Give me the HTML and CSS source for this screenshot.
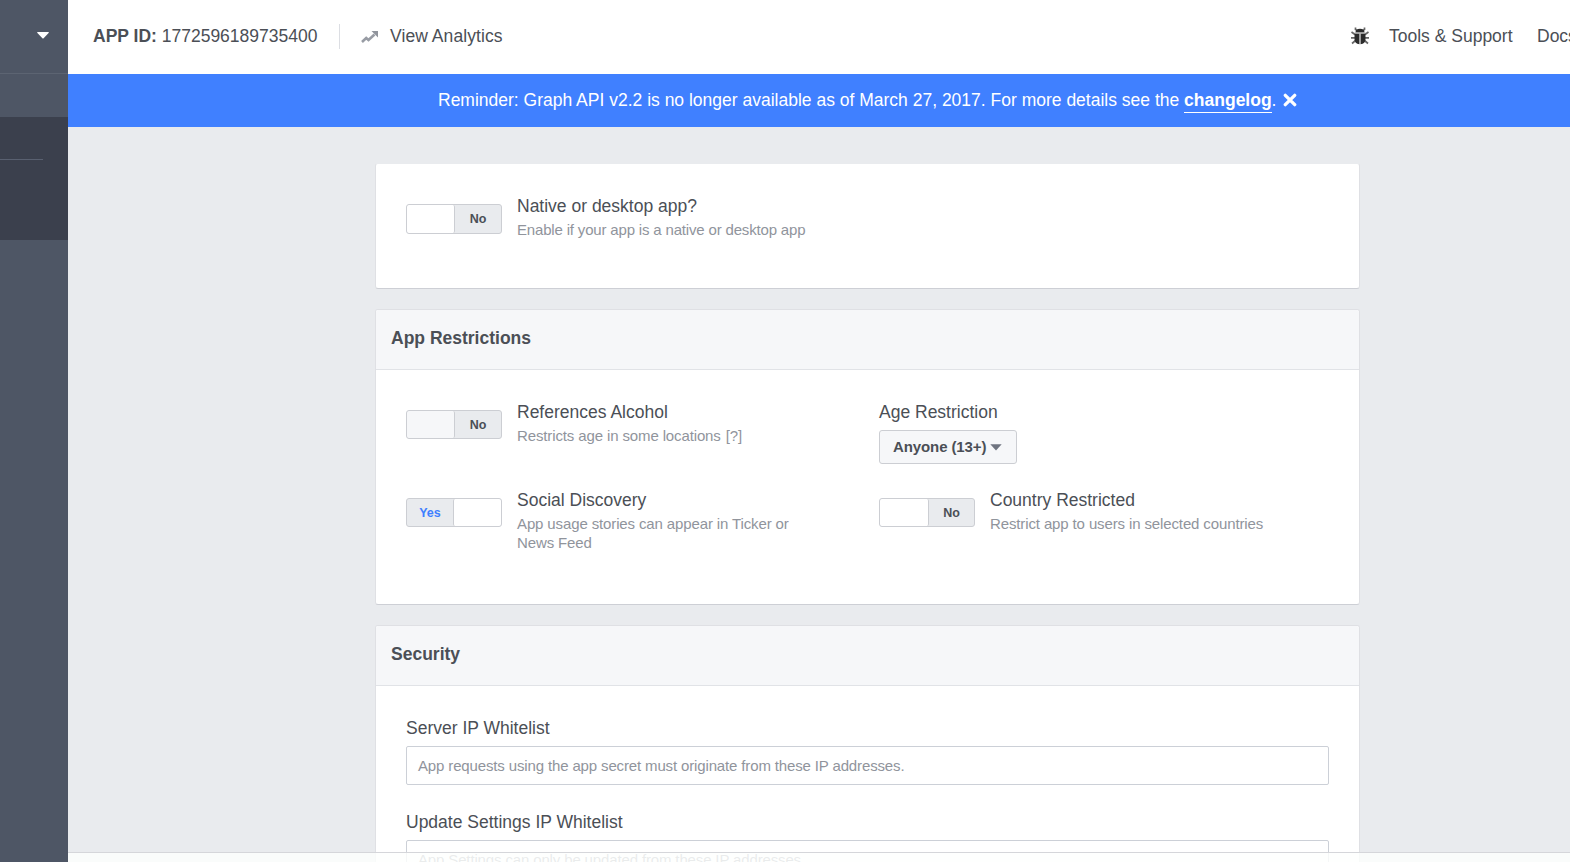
FILE: index.html
```html
<!DOCTYPE html>
<html lang="en">
<head>
<meta charset="utf-8">
<title>App Settings</title>
<link rel="stylesheet" href="styles.css">
</head>
<body>
<div class="app">
  <aside class="sidebar">
    <div class="side-top"><svg class="side-caret" width="12" height="7" viewBox="0 0 12 7"><path d="M.6 0h10.800q.8.4.2 1L6.600 6.200q-.6.5-1.200 0L.4 1Q-.2.4.6 0z" fill="#fff"/></svg></div>
    <div class="side-item"></div>
    <div class="side-active"><div class="side-line"></div></div>
  </aside>
  <div class="main">
    <header class="topbar">
      <div class="app-id"><b>APP ID:</b> 1772596189735400</div>
      <div class="separator"></div>
      <svg class="trend" width="18" height="14" viewBox="0 0 18 14"><path d="M1 12l4.200-4 2.300 2 6-5.500" fill="none" stroke="#989ca4" stroke-width="2.600"/><path d="M10.500 1H17v6.500z" fill="#90949c"/></svg>
      <a class="analytics">View Analytics</a>
      <svg class="bug" width="18" height="18" viewBox="0 0 18 18"><path d="M4.500.5v2l2 1M13.500.5v2l-2 1M.5 5l3.500 2.500M17.500 5L14 7.500M0 10.800h4M18 10.800h-4M1 16.500l3.500-3M17 16.500l-3.500-3" stroke="#666" stroke-width="1.700" fill="none"/><path d="M4.500 5.500Q4.500 1.800 9 1.800t4.500 3.700zM3.500 6.500h5v10.700Q3.500 17 3.500 12zM9.500 6.500h5V12q0 5-5 5.200z" fill="#2c2c2c"/><path d="M3.500 6h11M9 6.500v10.500" stroke="#aaa" stroke-width="1"/></svg>
      <a class="tools">Tools &amp; Support</a>
      <a class="docs">Docs</a>
    </header>
    <div class="banner">
      <span class="banner-text">Reminder: Graph API v2.2 is no longer available as of March 27, 2017. For more details see the <b>changelog</b>.</span>
      <svg class="close" width="14" height="14" viewBox="0 0 14 14"><path d="M2.300 2.300l9.400 9.400M11.700 2.300l-9.400 9.400" stroke="#fff" stroke-width="3.300" stroke-linecap="round"/></svg>
    </div>
    <main class="content">
      <section class="card card-native">
        <div class="setting">
          <div class="toggle tall"><span class="knob"></span><span class="state">No</span></div>
          <div class="copy native-copy"><h3>Native or desktop app?</h3><p>Enable if your app is a native or desktop app</p></div>
        </div>
      </section>
      <section class="card card-restrict">
        <h2>App Restrictions</h2>
        <div class="grid">
          <div class="setting">
            <div class="toggle"><span class="knob muted"></span><span class="state">No</span></div>
            <div class="copy"><h3>References Alcohol</h3><p>Restricts age in some locations <span class="help">[?]</span></p></div>
          </div>
          <div class="copy">
            <h3>Age Restriction</h3>
            <button class="select">Anyone (13+)<svg width="12" height="7" viewBox="0 0 12 7"><path d="M.3.2h11.400L6 6.600z" fill="#6f7480"/></svg></button>
          </div>
          <div class="setting">
            <div class="toggle on"><span class="state yes">Yes</span><span class="knob"></span></div>
            <div class="copy narrow"><h3>Social Discovery</h3><p>App usage stories can appear in Ticker or News Feed</p></div>
          </div>
          <div class="setting">
            <div class="toggle"><span class="knob wide"></span><span class="state">No</span></div>
            <div class="copy"><h3>Country Restricted</h3><p>Restrict app to users in selected countries</p></div>
          </div>
        </div>
      </section>
      <section class="card card-security">
        <h2>Security</h2>
        <div class="fields">
          <label class="field"><span>Server IP Whitelist</span><span class="input">App requests using the app secret must originate from these IP addresses.</span></label>
          <label class="field"><span>Update Settings IP Whitelist</span><span class="input">App Settings can only be updated from these IP addresses.</span></label>
        </div>
      </section>
    </main>
  </div>
</div>
<footer class="savebar"></footer>
</body>
</html>
```
FILE: styles.css
```css
* { box-sizing: border-box; }
html, body { margin: 0; height: 100%; overflow: hidden; }
body { font: 17.5px/23px "Liberation Sans", Arial, sans-serif; color: #4b4f56; background: #e9ebee; }
.app { display: flex; height: 862px; overflow: hidden; }

.sidebar { flex: none; width: 68px; background: #4e5665; }
.side-top { height: 74px; padding: 32px 0 0 37px; border-bottom: 1px solid #5c6472; line-height: 0; }
.side-item { height: 43px; }
.side-active { height: 123px; padding-top: 42px; background: #3b404d; }
.side-line { width: 43px; height: 1px; background: #596070; }

.main { flex: 1; min-width: 0; height: 862px; overflow: hidden; }
.topbar { display: flex; align-items: flex-start; height: 74px; padding: 24px 0 0 25px; background: #fff; white-space: nowrap; overflow: hidden; }
.app-id { flex: none; width: 246px; padding-top: 1px; }
.separator { flex: none; width: 1px; height: 25px; background: #dcdee3; }
.trend { flex: none; margin: 6px 0 0 21px; }
.analytics { flex: none; margin-left: 11px; padding-top: 1px; width: 961px; letter-spacing: .07px; }
.bug { flex: none; margin-top: 3px; }
.tools { margin-left: 20px; padding-top: 1px; width: 148px; flex: none; }
.docs { flex: none; padding-top: 1px; }

.banner { display: flex; height: 53px; padding: 15px 0 0 370px; background: #4080ff; color: #fff; white-space: nowrap; }
.banner b { display: inline-block; height: 24px; border-bottom: 1px solid #fff; }
.close { margin: 4px 0 0 7px; flex: none; }

.content { width: 985px; margin: 36px 0 0 307px; }
.card { background: #fff; border: 1px solid #dfe0e4; border-bottom-color: #cdcfd5; border-radius: 3px; }
.card-native { height: 126px; padding: 31px 30px; border-top-color: #e9ebee; }
.card-restrict { height: 296px; margin-top: 20px; }
.card-security { height: 320px; margin-top: 20px; }
h2 { margin: 0; height: 60px; padding: 17px 15px 0; background: #f6f7f9; border-bottom: 1px solid #e1e3e7; border-radius: 2px 2px 0 0; font-size: 17.5px; line-height: 23px; }
h3 { margin: 0; font-size: 17.5px; line-height: 23px; font-weight: 400; }
p { margin: 2px 0 0; font-size: 15px; line-height: 19px; letter-spacing: -.125px; color: #90949c; }
.native-copy p { letter-spacing: -.17px; }
.grid { display: grid; grid-template-columns: 473px 450px; grid-template-rows: 88px auto; padding: 31px 30px 0; }
.setting { display: flex; gap: 15px; }
.toggle { display: flex; flex: none; width: 96px; height: 29px; margin-top: 9px; border: 1px solid #ccced3; border-radius: 3px; background: #e9ebee; overflow: hidden; }
.tall { height: 30px; }
.knob { width: 48px; background: #fff; border-right: 1px solid #ccced3; border-radius: 2px; }
.wide { width: 49px; }
.muted { background: #f6f7f9; }
.on .knob { flex: 1; border-right: 0; border-left: 1px solid #ccced3; }
.state { flex: 1; text-align: center; font: bold 12.5px/29px "Liberation Sans", Arial, sans-serif; }
.yes { flex: 0 0 46px; color: #4080ff; }
.narrow { width: 290px; }
.help { display: inline-block; margin-left: 1px; }
.select { display: flex; align-items: center; width: 138px; height: 34px; margin-top: 6px; padding: 0 13px 2px; border: 1px solid #ccced3; border-radius: 3px; background: #f6f7f9; color: #4b4f56; font: bold 15px "Liberation Sans", Arial, sans-serif; letter-spacing: -.1px; white-space: nowrap; }
.select svg { flex: none; margin: 3px 0 0 4px; }
.fields { display: flex; flex-direction: column; gap: 26px; padding: 31px 30px 0; }
.field { display: flex; flex-direction: column; gap: 6px; }
.input { height: 39px; padding: 9px 11px; border: 1px solid #ccd0d7; border-radius: 2px; font-size: 15px; line-height: 19px; letter-spacing: -.14px; color: #90949c; }
.savebar { position: fixed; left: 68px; right: 0; bottom: 0; height: 10px; border-top: 1px solid #d5d6da; background: rgba(254, 255, 254, .82); background-clip: padding-box; }
```
